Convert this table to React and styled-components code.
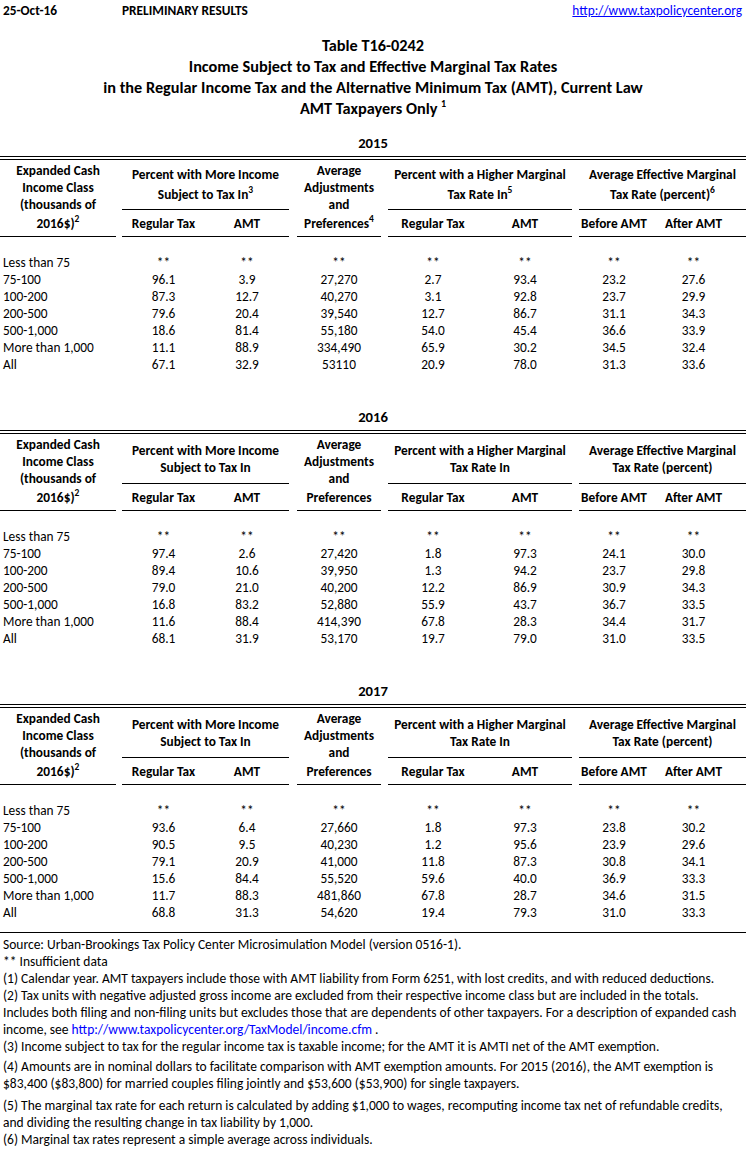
import React from "react";
import styled, { createGlobalStyle } from "styled-components";

const FONT = `Carlito, Calibri, Lato, "Liberation Sans", sans-serif`;
const COLS = "116px 6px 83px 84px 8px 84px 7px 90px 94px 7px 70px 97px";
const VALUE_COLS = [3, 4, 6, 8, 9, 11, 12];

const tables = [
  {
    year: "2015",
    marks: true,
    rows: [
      ["Less than 75", "**", "**", "**", "**", "**", "**", "**"],
      ["75-100", "96.1", "3.9", "27,270", "2.7", "93.4", "23.2", "27.6"],
      ["100-200", "87.3", "12.7", "40,270", "3.1", "92.8", "23.7", "29.9"],
      ["200-500", "79.6", "20.4", "39,540", "12.7", "86.7", "31.1", "34.3"],
      ["500-1,000", "18.6", "81.4", "55,180", "54.0", "45.4", "36.6", "33.9"],
      ["More than 1,000", "11.1", "88.9", "334,490", "65.9", "30.2", "34.5", "32.4"],
      ["All", "67.1", "32.9", "53110", "20.9", "78.0", "31.3", "33.6"],
    ],
  },
  {
    year: "2016",
    rows: [
      ["Less than 75", "**", "**", "**", "**", "**", "**", "**"],
      ["75-100", "97.4", "2.6", "27,420", "1.8", "97.3", "24.1", "30.0"],
      ["100-200", "89.4", "10.6", "39,950", "1.3", "94.2", "23.7", "29.8"],
      ["200-500", "79.0", "21.0", "40,200", "12.2", "86.9", "30.9", "34.3"],
      ["500-1,000", "16.8", "83.2", "52,880", "55.9", "43.7", "36.7", "33.5"],
      ["More than 1,000", "11.6", "88.4", "414,390", "67.8", "28.3", "34.4", "31.7"],
      ["All", "68.1", "31.9", "53,170", "19.7", "79.0", "31.0", "33.5"],
    ],
  },
  {
    year: "2017",
    rows: [
      ["Less than 75", "**", "**", "**", "**", "**", "**", "**"],
      ["75-100", "93.6", "6.4", "27,660", "1.8", "97.3", "23.8", "30.2"],
      ["100-200", "90.5", "9.5", "40,230", "1.2", "95.6", "23.9", "29.6"],
      ["200-500", "79.1", "20.9", "41,000", "11.8", "87.3", "30.8", "34.1"],
      ["500-1,000", "15.6", "84.4", "55,520", "59.6", "40.0", "36.9", "33.3"],
      ["More than 1,000", "11.7", "88.3", "481,860", "67.8", "28.7", "34.6", "31.5"],
      ["All", "68.8", "31.3", "54,620", "19.4", "79.3", "31.0", "33.3"],
    ],
  },
];

function YearTable({ year, marks, rows }) {
  const mark = (n) => (marks ? <Sup>{n}</Sup> : null);
  return (
    <Block>
      <YearTitle>{year}</YearTitle>
      <DoubleRule />
      <HeadGrid>
        <StubHead $col="1">
          <Line>Expanded Cash</Line>
          <Line>Income Class</Line>
          <Line>(thousands of</Line>
          <LastLine>
            2016$)<Sup>2</Sup>
          </LastLine>
        </StubHead>
        <GroupHead $col="3 / 5">
          <Line>Percent with More Income</Line>
          <Line $gap={marks ? 3 : 0}>Subject to Tax In{mark(3)}</Line>
        </GroupHead>
        <StubHead $col="6">
          <Line>Average</Line>
          <Line>Adjustments</Line>
          <Line>and</Line>
          <LastLine>Preferences{mark(4)}</LastLine>
        </StubHead>
        <GroupHead $col="8 / 10">
          <Line>Percent with a Higher Marginal</Line>
          <Line $gap={marks ? 3 : 0}>Tax Rate In{mark(5)}</Line>
        </GroupHead>
        <GroupHead $col="11 / 13">
          <Line>Average Effective Marginal</Line>
          <Line $gap={marks ? 3 : 0}>Tax Rate (percent){mark(6)}</Line>
        </GroupHead>
        <SubHead $col={3}>Regular Tax</SubHead>
        <SubHead $col={4}>AMT</SubHead>
        <SubHead $col={8}>Regular Tax</SubHead>
        <SubHead $col={9}>AMT</SubHead>
        <SubHead $col={11}>Before AMT</SubHead>
        <SubHead $col={12} $padRight>After AMT</SubHead>
      </HeadGrid>
      <Body>
        {rows.map(([label, ...values]) => (
          <Row key={label}>
            <Label>{label}</Label>
            {values.map((v, i) => (
              <Value key={i} $col={VALUE_COLS[i]} $padRight={VALUE_COLS[i] === 12}>
                {v}
              </Value>
            ))}
          </Row>
        ))}
      </Body>
    </Block>
  );
}

export default function App() {
  return (
    <Page>
      <GlobalStyle />
      <TopBar>
        <DateCell>25-Oct-16</DateCell>
        <Status>PRELIMINARY RESULTS</Status>
        <TopLink href="#">http://www.taxpolicycenter.org</TopLink>
      </TopBar>
      <Titles>
        <div>Table T16-0242</div>
        <div>Income Subject to Tax and Effective Marginal Tax Rates</div>
        <div>in the Regular Income Tax and the Alternative Minimum Tax (AMT), Current Law</div>
        <div>
          AMT Taxpayers Only <TitleSup>1</TitleSup>
        </div>
      </Titles>
      {tables.map((t) => (
        <YearTable key={t.year} {...t} />
      ))}
      <Notes>
        <Note>Source: Urban-Brookings Tax Policy Center Microsimulation Model (version 0516-1).</Note>
        <Note>** Insufficient data</Note>
        <Note>
          (1) Calendar year. AMT taxpayers include those with AMT liability from Form 6251, with lost credits, and with reduced deductions.
        </Note>
        <Note>
          (2) Tax units with negative adjusted gross income are excluded from their respective income class but are included in the totals.
        </Note>
        <Note>
          Includes both filing and non-filing units but excludes those that are dependents of other taxpayers. For a description of expanded cash
        </Note>
        <Note>
          income, see <NoteLink>http://www.taxpolicycenter.org/TaxModel/income.cfm</NoteLink> .
        </Note>
        <Note>(3) Income subject to tax for the regular income tax is taxable income; for the AMT it is AMTI net of the AMT exemption.</Note>
        <Note $gap={3}>
          (4) Amounts are in nominal dollars to facilitate comparison with AMT exemption amounts. For 2015 (2016), the AMT exemption is
        </Note>
        <Note>$83,400 ($83,800) for married couples filing jointly and $53,600 ($53,900) for single taxpayers.</Note>
        <Note $gap={5}>
          (5) The marginal tax rate for each return is calculated by adding $1,000 to wages, recomputing income tax net of refundable credits,
        </Note>
        <Note>and dividing the resulting change in tax liability by 1,000.</Note>
        <Note>(6) Marginal tax rates represent a simple average across individuals.</Note>
      </Notes>
    </Page>
  );
}

const GlobalStyle = createGlobalStyle`
  html, body {
    margin: 0;
    background: #ffffff;
  }
  body {
    color: #000000;
    font-family: ${FONT};
    font-size: 13.33px;
  }
`;

const Page = styled.div`
  width: 746px;
  padding-bottom: 10px;
`;

const TopBar = styled.div`
  display: flex;
  align-items: center;
  height: 17px;
  padding-top: 2px;
  line-height: 17px;
`;

const DateCell = styled.div`
  width: 122px;
  padding-left: 3px;
  box-sizing: border-box;
  font-weight: bold;
`;

const Status = styled.div`
  font-weight: bold;
`;

const TopLink = styled.a`
  margin-left: auto;
  margin-right: 4px;
  color: #0000ff;
  text-decoration: underline;
`;

const Titles = styled.div`
  margin-top: 16px;
  text-align: center;
  font-weight: bold;
  font-size: 16.3px;
  line-height: 21px;
`;

const TitleSup = styled.sup`
  font-size: 10px;
  line-height: 0;
  vertical-align: 7px;
`;

const Block = styled.section`
  margin-top: 16px;

  & + & {
    margin-top: 36px;
  }
`;

const YearTitle = styled.div`
  height: 17px;
  line-height: 17px;
  text-align: center;
  font-weight: bold;
  font-size: 14.67px;
`;

const DoubleRule = styled.div`
  margin-top: 4px;
  height: 2px;
  border-top: 1px solid #000;
  border-bottom: 1px solid #000;
`;

const HeadGrid = styled.div`
  display: grid;
  grid-template-columns: ${COLS};
  grid-template-rows: 50px 27px;
  font-weight: bold;
  line-height: 17px;
  text-align: center;
`;

const HeadCell = styled.div`
  box-sizing: border-box;
  border-bottom: 1px solid #000;
  display: flex;
  flex-direction: column;
  justify-content: center;
  white-space: nowrap;
`;

const StubHead = styled(HeadCell)`
  grid-column: ${(p) => p.$col};
  grid-row: 1 / 3;
  padding-bottom: 3px;
`;

const GroupHead = styled(HeadCell)`
  grid-column: ${(p) => p.$col};
  grid-row: 1;
`;

const SubHead = styled(HeadCell)`
  grid-column: ${(p) => p.$col};
  grid-row: 2;
  padding-right: ${(p) => (p.$padRight ? "8px" : "0")};
`;

const Line = styled.span`
  display: block;
  margin-top: ${(p) => p.$gap || 0}px;
`;

const LastLine = styled(Line)`
  margin-top: 2px;
`;

const Sup = styled.sup`
  font-size: 9.5px;
  line-height: 0;
  vertical-align: 6px;
`;

const Body = styled.div`
  padding-top: 17px;
`;

const Row = styled.div`
  display: grid;
  grid-template-columns: ${COLS};
  height: 17px;
  line-height: 17px;
`;

const Label = styled.div`
  grid-column: 1 / 3;
  padding-left: 3px;
  white-space: nowrap;
`;

const Value = styled.div`
  grid-column: ${(p) => p.$col};
  text-align: center;
  padding-right: ${(p) => (p.$padRight ? "8px" : "0")};
`;

const Notes = styled.div`
  margin-top: 11px;
  border-top: 1px solid #000;
  padding-top: 3px;
  font-size: 13.5px;
`;

const Note = styled.div`
  height: 17px;
  line-height: 17px;
  padding-left: 3px;
  margin-top: ${(p) => p.$gap || 0}px;
  white-space: nowrap;
`;

const NoteLink = styled.span`
  color: #0000ff;
`;
